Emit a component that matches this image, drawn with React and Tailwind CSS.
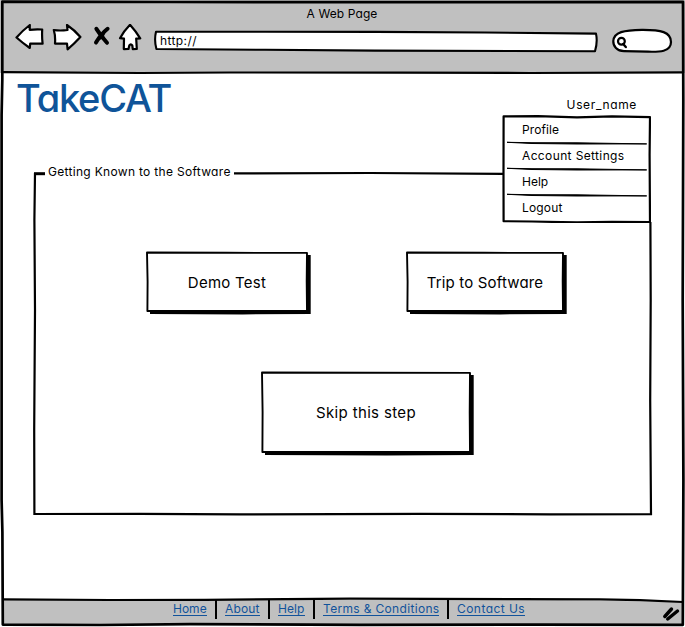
import React from "react";

function SketchButton({ children, width, height, className, labelClass }) {
  const w = width;
  const h = height;
  return (
    <button className={`relative flex shrink-0 items-center justify-center ${className}`}>
      <svg className="absolute inset-0 h-full w-full overflow-visible" aria-hidden="true">
        <path d={`M4 4 V${h + 3} L${w * 0.6} ${h + 3.4} L${w + 3.7} ${h + 3} V3 H${w} Z`} fill="#000" />
        <path
          d={`M1 0.5 L${w * 0.5} 0.8 L${w} 0.9 L${w - 0.3} ${h * 0.5} L${w} ${h} L${w * 0.45} ${h - 0.1} L1.4 ${h} L1.6 ${h * 0.5} Z`}
          fill="#fff"
          stroke="#000"
          strokeWidth="1.9"
          strokeLinejoin="round"
        />
      </svg>
      <span className={`relative top-px whitespace-nowrap text-[15px] leading-5 ${labelClass}`}>{children}</span>
    </button>
  );
}

function Toolbar() {
  return (
    <header className="flex h-[73px] shrink-0 flex-col bg-[#c0c0c0]">
      <div className="flex h-[28px] items-center justify-center pr-px text-[12px] tracking-[0.1px]">A Web Page</div>
      <div className="flex h-[26px] items-start pl-[15px]">
        <svg width="128" height="28" viewBox="15 24 128 28" fill="#fff" stroke="#000" strokeWidth="2.2" strokeLinejoin="round" strokeLinecap="round" className="-mt-1 shrink-0">
          <path d="M16.5 37.5 Q22 31 29.8 25 L29.7 29.8 Q36 29 42.2 29.5 Q41.8 37 42.6 43.7 L30.2 43.6 L29.8 48 Q22 42.5 16.5 37.5Z" />
          <path d="M53.8 30 Q60 31 67.5 30 L67 25 Q74.5 30 80.4 37 Q74 44 67.6 49.3 L67 43.7 L55 43.6 Q55.6 36 53.8 30Z" />
          <path d="M130 24.8 Q136 31.5 140.2 38.3 L136.2 38.6 L136.8 49 L132.8 49.2 L132.3 45.5 Q130.8 43.4 129.3 45.5 L128.5 49 L123.8 49.1 L124 38.7 L120 38.2 Q123.5 31.5 130 24.8Z" />
          <path d="M96.4 28.8 Q101 36 107 42.8 M107.6 28.8 Q101 34 96 42.6" fill="none" strokeWidth="4" />
          <path d="M96.6 30 L101.8 33.5 L107 29.5 L104 36 L106.5 42 L101.5 39 L96.5 42 L99.3 36 Z" fill="#000" stroke="none" />
        </svg>
        <div className="relative ml-[12px] mt-[3px] flex h-[20px] w-[442px] shrink-0 items-center pl-[5px] text-[12px] tracking-[0.4px]">
          <svg className="absolute inset-0 h-full w-full overflow-visible" aria-hidden="true">
            <path d="M1 .8 L110 .7 L220 .9 L330 1.5 L441 2.6 Q442.8 11 440 20.2 L220 19.6 L110 18.8 L1.4 18 Q-1 9 1 .8Z" fill="#fff" stroke="#000" strokeWidth="2.1" strokeLinejoin="round" />
          </svg>
          <span className="relative">http://</span>
        </div>
        <svg width="62" height="28" viewBox="611 27 62 28" className="ml-[14px] -mt-px shrink-0" fill="#fff" stroke="#000">
          <path d="M613.3 41 C614 32 624 30 642 29.8 C661 29.7 671 32 671 42 C671 52 659 52 648 51.7 L624 51.2 C617 51 613 46 613.3 41Z" strokeWidth="2.2" />
          <circle cx="621.4" cy="41.2" r="3.4" strokeWidth="2.2" />
          <path d="M623.2 44 L625.8 47" strokeWidth="2.4" strokeLinecap="round" />
        </svg>
      </div>
    </header>
  );
}

const menuItems = [
  { label: "Profile", spacing: "tracking-[0.1px]" },
  { label: "Account Settings", spacing: "tracking-[0.37px]" },
  { label: "Help", spacing: "tracking-[0px]" },
  { label: "Logout", spacing: "tracking-[0.15px]" },
];

function UserMenu() {
  return (
    <div className="absolute left-[502px] top-[42px] z-10 h-[108px] w-[149px] pt-[2px]">
      <svg className="absolute inset-0 h-full w-full" aria-hidden="true">
        <path d="M1.6 1.4 L36 1.2 L75 2.3 L110 1.4 L148 2.1 L147.6 40 L148 107 L110 106.8 L75 107.4 L30 106.5 L1.6 106.2 L1.5 60 Z" fill="#fff" stroke="#000" strokeWidth="2.2" strokeLinejoin="round" />
        <path d="M5 27.3 L30 27.7 L75 27.8 L144.7 28.9 L75 29 L30 28.5Z M5 53.3 L30 53.7 L75 53.8 L144.7 54.9 L75 55 L30 54.5Z M5 79.3 L30 79.7 L75 79.8 L144.7 80.9 L75 81 L30 80.5Z" stroke="#000" strokeWidth="1" strokeLinejoin="round" />
      </svg>
      <ul className="relative">
        {menuItems.map((item) => (
          <li key={item.label} className={`flex h-[26px] items-center whitespace-nowrap pl-5 text-[12px] ${item.spacing}`}>
            {item.label}
          </li>
        ))}
      </ul>
    </div>
  );
}

const links = [
  { label: "Home", box: "w-[34px]", spacing: "tracking-[0px]" },
  { label: "About", box: "w-[35px]", spacing: "tracking-[0.15px]" },
  { label: "Help", box: "w-[27px]", spacing: "tracking-[0.05px]" },
  { label: "Terms & Conditions", box: "w-[116px]", spacing: "tracking-[0.33px]" },
  { label: "Contact Us", box: "w-[68px]", spacing: "tracking-[0.45px]" },
];

function Footer() {
  return (
    <footer className="relative flex h-[27px] shrink-0 items-start pl-[173px]">
      <svg className="absolute inset-0 h-full w-full" viewBox="0 600 685 27" aria-hidden="true">
        <path d="M3 600 H560 L683 602 V625 H3Z" fill="#c0c0c0" />
      </svg>
      <nav className="relative flex items-start">
        {links.map((link, i) => (
          <React.Fragment key={link.label}>
            {i > 0 && <span className="mx-[8px] h-[19px] w-[2px] shrink-0 bg-black" />}
            <a href="#" className={`mt-px block h-[15px] shrink-0 whitespace-nowrap border-b border-[#12539b] text-[12px] leading-4 text-[#12539b] ${link.box} ${link.spacing}`}>
              {link.label}
            </a>
          </React.Fragment>
        ))}
      </nav>
    </footer>
  );
}

// Ink lines of the browser window, drawn over its panels
function WindowFrame() {
  return (
    <svg className="pointer-events-none absolute inset-0 z-20" width="685" height="627" viewBox="0 0 685 627" fill="none" stroke="#000" strokeWidth="2.2" strokeLinecap="round" strokeLinejoin="round" aria-hidden="true">
      <path d="M2.3 1.7 L170 2 L430 2.2 L683 1.8 L683.3 100 L682.7 300 L683.4 480 L682.8 624.8 L540 624.6 L360 624.8 L190 624.2 L100 625 L2.8 624.6 L2.4 532 L1.6 500 L1.6 270 L1.6 115 L2.3 80 Z" strokeWidth="2.7" />
      <path d="M3 72.2 L140 73 L230 72.5 L400 72.6 L530 73 L683 72.3" />
      <path d="M3 599.3 L110 600 L205 599.8 L350 598.6 L520 599.2 L600 599.3 L640 600.2 L683 602" />
      <path d="M664.8 616.5 L671.5 609 M667.7 619 L677.5 611" strokeWidth="3.4" />
    </svg>
  );
}

export default function App() {
  return (
    <div className="relative flex h-[627px] w-[685px] flex-col overflow-hidden bg-white font-['Inter','Liberation_Sans',sans-serif] text-black [font-feature-settings:'cv11']">
      <Toolbar />
      <main className="relative flex h-[527px] shrink-0 flex-col">
        <div className="flex h-[99px] shrink-0 items-start justify-between pl-[16px] pr-[48px]">
          <h1 className="mt-[5px] text-[38px] font-medium leading-[40px] tracking-[-1.2px] text-[#0f5499]">TakeCAT</h1>
          <span className="mt-[24px] text-[12px] leading-4 tracking-[0.65px]">User_name</span>
        </div>
        <UserMenu />
        <section className="relative ml-[33px] h-[344px] w-[619px] shrink-0">
          <svg className="absolute inset-0 overflow-visible" width="619" height="344" viewBox="33 172 619 344" fill="none" stroke="#000" aria-hidden="true">
            <path d="M34 173.7 H45" strokeWidth="3" />
            <path d="M234 173.4 L370 173 L503 173.8" strokeWidth="2.2" />
            <path d="M35 173 L34.4 220 L35 310 L34.2 430 L34.4 514 L140 513.8 L240 514.4 L420 513.8 L550 514.3 L651 514.2 L650.2 400 L650.7 300 L650.4 222" strokeWidth="2.2" />
          </svg>
          <h2 className="relative ml-[15px] h-[80px] whitespace-nowrap text-[12px] font-normal leading-4 tracking-[0.31px]">
            <span className="relative -top-[8px]">Getting Known to the Software</span>
          </h2>
          <div className="flex items-start gap-[98px] pl-[113px]">
            <SketchButton width={161} height={59} className="h-[60px] w-[162px]" labelClass="tracking-[0.25px]">Demo Test</SketchButton>
            <SketchButton width={157} height={59} className="h-[60px] w-[158px]" labelClass="tracking-[0.17px]">Trip to Software</SketchButton>
          </div>
          <div className="mt-[60px] flex pl-[228px]">
            <SketchButton width={209} height={80} className="h-[80px] w-[210px]" labelClass="tracking-[0.35px]">Skip this step</SketchButton>
          </div>
        </section>
      </main>
      <Footer />
      <WindowFrame />
    </div>
  );
}
